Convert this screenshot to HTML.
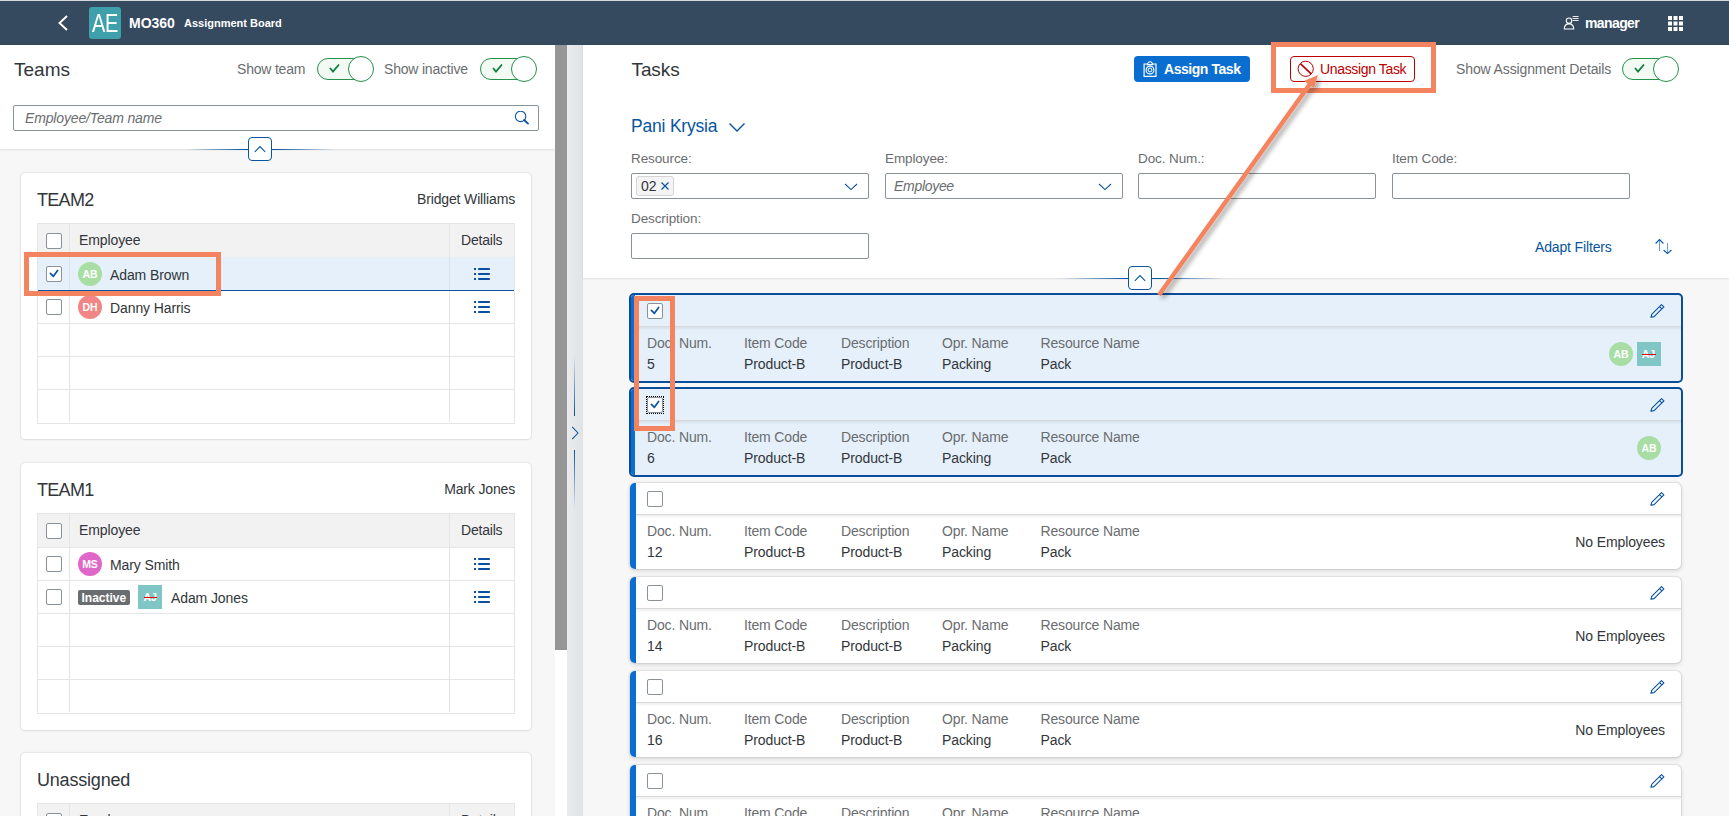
<!DOCTYPE html><html><head><meta charset="utf-8"><style>
*{box-sizing:border-box;margin:0;padding:0}
html,body{width:1729px;height:816px;overflow:hidden}
body{position:relative;background:#f7f7f7;font-family:"Liberation Sans",sans-serif;color:#32363a;font-size:14px}
.a{position:absolute}
.t{position:absolute;white-space:nowrap;line-height:1}
.cb{position:absolute;width:16px;height:16px;border:1px solid #89919a;border-radius:2px;background:#fff}
.cb svg{position:absolute;left:-1px;top:-1px}
.inp{position:absolute;height:26px;border:1px solid #89919a;border-radius:2px;background:#fff}
.lbl{position:absolute;white-space:nowrap;line-height:1;color:#6a6d70;font-size:13.5px}
.card{position:absolute;background:#fff;border-radius:4px;box-shadow:0 0 2px rgba(0,0,0,.2),0 1px 3px rgba(0,0,0,.05)}
.tb{position:absolute;background:#fff;border:1px solid #e5e5e5}
.hl{position:absolute;border:5px solid #f4845f}
.av{position:absolute;width:24px;height:24px;border-radius:50%;color:#fff;font-weight:bold;font-size:10.5px;text-align:center;line-height:24px}
.tog{position:absolute;width:57px;height:26px}
.tog .tr{position:absolute;left:0;top:2px;width:50px;height:22px;border:1px solid #25914a;border-radius:11px;background:#f3faf4}
.tog .kn{position:absolute;left:31px;top:0;width:26px;height:26px;border:1px solid #25914a;border-radius:50%;background:#fff}
.tog svg{position:absolute;left:12px;top:7px}
.task{position:absolute;left:630px;width:1051px;border-radius:5px;background:#fff;box-shadow:0 0 2px rgba(0,0,0,.28),0 2px 5px rgba(0,0,0,.12)}
.task .bar{position:absolute;left:0;top:0;bottom:0;width:6px;background:#0a6ed1;border-radius:5px 0 0 5px}
.task.sel{left:629px;width:1054px;background:#e5f0fa;border:2px solid #0a4e9b;box-shadow:none}
.task .sep{position:absolute;left:6px;right:0;height:1px;background:#e0e0e0}
.task .lab{position:absolute;white-space:nowrap;line-height:1;color:#6a6d70;font-size:14px}
.task .val{position:absolute;white-space:nowrap;line-height:1;color:#32363a;font-size:14px}
</style></head><body>
<div class="a" style="left:0;top:0;width:1729px;height:1px;background:#d5d8db"></div>
<div class="a" style="left:0;top:1px;width:1729px;height:44px;background:#354a5f"></div>
<svg class="a" style="left:56px;top:14px" width="14" height="18" viewBox="0 0 14 18"><path d="M11 2 L3.5 9 L11 16" fill="none" stroke="#fff" stroke-width="1.9"/></svg>
<div class="a" style="left:89px;top:7px;width:32px;height:32px;background:#3ea0ab;border-radius:3px"></div>
<div class="t" style="left:91.5px;top:10.84px;font-size:25px;color:#fff;font-weight:normal;transform:scaleX(0.8);transform-origin:0 0;letter-spacing:-0.5px;">AE</div>
<div class="t" style="left:129px;top:16.15px;font-size:14px;color:#fff;font-weight:bold;letter-spacing:0px;">MO360</div>
<div class="t" style="left:184px;top:17.69px;font-size:11px;color:#fff;font-weight:bold;letter-spacing:0px;">Assignment Board</div>
<svg class="a" style="left:1563px;top:15px" width="16" height="16" viewBox="0 0 16 16"><circle cx="6" cy="5.7" r="2.7" fill="none" stroke="#fff" stroke-width="1.1"/><path d="M1.3 14 C1.3 10.6 3.3 8.9 6 8.9 C8.7 8.9 10.7 10.6 10.7 14 Z" fill="none" stroke="#fff" stroke-width="1.1"/><path d="M9.6 1.5h6M9.6 3.5h6M9.6 5.5h6" stroke="#fff" stroke-width="0.9"/></svg>
<div class="t" style="left:1585px;top:16.15px;font-size:14px;color:#fff;font-weight:bold;letter-spacing:-0.6px;">manager</div>
<svg class="a" style="left:1667.5px;top:15.5px" width="15" height="15" viewBox="0 0 15 15"><rect x="0.0" y="0.0" width="4" height="4" fill="#fff"/><rect x="5.5" y="0.0" width="4" height="4" fill="#fff"/><rect x="11.0" y="0.0" width="4" height="4" fill="#fff"/><rect x="0.0" y="5.5" width="4" height="4" fill="#fff"/><rect x="5.5" y="5.5" width="4" height="4" fill="#fff"/><rect x="11.0" y="5.5" width="4" height="4" fill="#fff"/><rect x="0.0" y="11.0" width="4" height="4" fill="#fff"/><rect x="5.5" y="11.0" width="4" height="4" fill="#fff"/><rect x="11.0" y="11.0" width="4" height="4" fill="#fff"/></svg>
<div class="a" style="left:0;top:45px;width:555px;height:104px;background:#fff;box-shadow:0 1px 2px rgba(0,0,0,.1)"></div>
<div class="t" style="left:14px;top:59.92px;font-size:19px;color:#32363a;font-weight:normal;">Teams</div>
<div class="t" style="left:237px;top:62.15px;font-size:14px;color:#6a6d70;font-weight:normal;letter-spacing:-0.2px;">Show team</div>
<div class="t" style="left:384px;top:62.15px;font-size:14px;color:#6a6d70;font-weight:normal;letter-spacing:-0.2px;">Show inactive</div>
<div class="tog" style="left:317px;top:56px"><div class="tr"></div><svg width="11" height="10" viewBox="0 0 11 10"><path d="M1 5 L4 8.5 L10 1.5" fill="none" stroke="#107e3e" stroke-width="1.8"/></svg><div class="kn"></div></div>
<div class="tog" style="left:480px;top:56px"><div class="tr"></div><svg width="11" height="10" viewBox="0 0 11 10"><path d="M1 5 L4 8.5 L10 1.5" fill="none" stroke="#107e3e" stroke-width="1.8"/></svg><div class="kn"></div></div>
<div class="inp" style="left:13px;top:105px;width:526px;height:26px"></div>
<div class="t" style="left:25px;top:111.15px;font-size:14px;color:#6a6d70;font-weight:normal;font-style:italic;letter-spacing:-0.15px;">Employee/Team name</div>
<svg class="a" style="left:514px;top:111px" width="16" height="15" viewBox="0 0 16 15"><circle cx="6.6" cy="5.4" r="5.2" fill="none" stroke="#0854a0" stroke-width="1.05"/><path d="M10.2 9 L14 12.6" stroke="#0854a0" stroke-width="1.9" stroke-linecap="round"/></svg>
<div class="a" style="left:185px;top:149px;width:150px;height:1px;background:linear-gradient(90deg,rgba(8,84,160,0),#0854a0 40%,#0854a0 60%,rgba(8,84,160,0))"></div>
<div class="a" style="left:248px;top:137px;width:24px;height:24px;border:1px solid #0854a0;border-radius:4px;background:#fff"></div>
<svg class="a" style="left:248px;top:137px" width="24" height="24" viewBox="0 0 24 24"><path d="M6.8 14.8 L12 9.6 L17.2 14.8" fill="none" stroke="#0854a0" stroke-width="1.05"/></svg>
<div class="card" style="left:21px;top:173px;width:510px;height:266px"></div>
<div class="t" style="left:37px;top:190.76px;font-size:18px;color:#32363a;font-weight:normal;letter-spacing:-0.7px;">TEAM2</div>
<div class="t" style="left:515px;top:192.15px;font-size:14px;color:#32363a;font-weight:normal;transform:translateX(-100%);letter-spacing:-0.15px;">Bridget Williams</div>
<div class="tb" style="left:37px;top:223px;width:478px;height:201px"></div>
<div class="a" style="left:38px;top:224px;width:476px;height:33px;background:#f2f2f2"></div>
<div class="a" style="left:38px;top:257px;width:476px;height:1px;background:#e5e5e5"></div>
<div class="a" style="left:38px;top:290px;width:476px;height:1px;background:#e5e5e5"></div>
<div class="a" style="left:38px;top:323px;width:476px;height:1px;background:#e5e5e5"></div>
<div class="a" style="left:38px;top:356px;width:476px;height:1px;background:#e5e5e5"></div>
<div class="a" style="left:38px;top:389px;width:476px;height:1px;background:#e5e5e5"></div>
<div class="a" style="left:69px;top:224px;width:1px;height:198px;background:#e5e5e5"></div>
<div class="a" style="left:449px;top:224px;width:1px;height:198px;background:#e5e5e5"></div>
<div class="cb" style="left:46px;top:233px"></div>
<div class="t" style="left:79px;top:233.15px;font-size:14px;color:#32363a;font-weight:normal;letter-spacing:-0.1px;">Employee</div>
<div class="t" style="left:461px;top:233.15px;font-size:14px;color:#32363a;font-weight:normal;letter-spacing:-0.2px;">Details</div>
<div class="a" style="left:38px;top:257px;width:476px;height:34px;background:#e5f0fa;border-bottom:1px solid #0854a0"></div>
<div class="a" style="left:69px;top:257px;width:1px;height:33px;background:#dde3ea"></div>
<div class="a" style="left:449px;top:257px;width:1px;height:33px;background:#dde3ea"></div>
<div class="cb" style="left:46px;top:266px"><svg width="16" height="16" viewBox="0 0 16 16"><path d="M4.4 7.4 L7.4 10.3 L11.6 4.4" fill="none" stroke="#0854a0" stroke-width="1.7" stroke-linecap="round" stroke-linejoin="round"/></svg></div>
<div class="av" style="left:78px;top:262px;background:#a8dea4">AB</div>
<div class="t" style="left:110px;top:268.15px;font-size:14px;color:#32363a;font-weight:normal;letter-spacing:-0.1px;">Adam Brown</div>
<svg class="a" style="left:474px;top:268px" width="16" height="13" viewBox="0 0 16 13"><g fill="#0a4fa0"><rect x="0" y="0" width="2" height="2"/><rect x="0" y="5" width="2" height="2"/><rect x="0" y="10" width="2" height="2"/><rect x="4" y="0" width="12" height="2" rx="0.8"/><rect x="4" y="5" width="12" height="2" rx="0.8"/><rect x="4" y="10" width="12" height="2" rx="0.8"/></g></svg>
<div class="cb" style="left:46px;top:299px"></div>
<div class="av" style="left:78px;top:295px;background:#f28585">DH</div>
<div class="t" style="left:110px;top:301.15px;font-size:14px;color:#32363a;font-weight:normal;letter-spacing:-0.1px;">Danny Harris</div>
<svg class="a" style="left:474px;top:301px" width="16" height="13" viewBox="0 0 16 13"><g fill="#0a4fa0"><rect x="0" y="0" width="2" height="2"/><rect x="0" y="5" width="2" height="2"/><rect x="0" y="10" width="2" height="2"/><rect x="4" y="0" width="12" height="2" rx="0.8"/><rect x="4" y="5" width="12" height="2" rx="0.8"/><rect x="4" y="10" width="12" height="2" rx="0.8"/></g></svg>
<div class="card" style="left:21px;top:463px;width:510px;height:267px"></div>
<div class="t" style="left:37px;top:480.76px;font-size:18px;color:#32363a;font-weight:normal;letter-spacing:-0.7px;">TEAM1</div>
<div class="t" style="left:515px;top:482.15px;font-size:14px;color:#32363a;font-weight:normal;transform:translateX(-100%);letter-spacing:-0.15px;">Mark Jones</div>
<div class="tb" style="left:37px;top:513px;width:478px;height:201px"></div>
<div class="a" style="left:38px;top:514px;width:476px;height:33px;background:#f2f2f2"></div>
<div class="a" style="left:38px;top:547px;width:476px;height:1px;background:#e5e5e5"></div>
<div class="a" style="left:38px;top:580px;width:476px;height:1px;background:#e5e5e5"></div>
<div class="a" style="left:38px;top:613px;width:476px;height:1px;background:#e5e5e5"></div>
<div class="a" style="left:38px;top:646px;width:476px;height:1px;background:#e5e5e5"></div>
<div class="a" style="left:38px;top:679px;width:476px;height:1px;background:#e5e5e5"></div>
<div class="a" style="left:69px;top:514px;width:1px;height:198px;background:#e5e5e5"></div>
<div class="a" style="left:449px;top:514px;width:1px;height:198px;background:#e5e5e5"></div>
<div class="cb" style="left:46px;top:523px"></div>
<div class="t" style="left:79px;top:523.15px;font-size:14px;color:#32363a;font-weight:normal;letter-spacing:-0.1px;">Employee</div>
<div class="t" style="left:461px;top:523.15px;font-size:14px;color:#32363a;font-weight:normal;letter-spacing:-0.2px;">Details</div>
<div class="cb" style="left:46px;top:556px"></div>
<div class="av" style="left:78px;top:552px;background:#e066c8">MS</div>
<div class="t" style="left:110px;top:558.15px;font-size:14px;color:#32363a;font-weight:normal;letter-spacing:-0.1px;">Mary Smith</div>
<svg class="a" style="left:474px;top:558px" width="16" height="13" viewBox="0 0 16 13"><g fill="#0a4fa0"><rect x="0" y="0" width="2" height="2"/><rect x="0" y="5" width="2" height="2"/><rect x="0" y="10" width="2" height="2"/><rect x="4" y="0" width="12" height="2" rx="0.8"/><rect x="4" y="5" width="12" height="2" rx="0.8"/><rect x="4" y="10" width="12" height="2" rx="0.8"/></g></svg>
<div class="cb" style="left:46px;top:589px"></div>
<div class="a" style="left:78px;top:590px;width:52px;height:15px;background:#6a6d70;border-radius:2px"></div>
<div class="t" style="left:81.5px;top:592.34px;font-size:12px;color:#fff;font-weight:bold;letter-spacing:0px;">Inactive</div>
<div class="a" style="left:138px;top:585px;width:24px;height:24px;background:#7fc6c5"></div>
<div class="t" style="left:143.5px;top:592.11px;font-size:10.5px;color:#fff;font-weight:bold;">AJ</div>
<div class="a" style="left:144px;top:596.8px;width:13px;height:1.4px;background:#e00"></div>
<div class="t" style="left:171px;top:591.15px;font-size:14px;color:#32363a;font-weight:normal;letter-spacing:-0.1px;">Adam Jones</div>
<svg class="a" style="left:474px;top:591px" width="16" height="13" viewBox="0 0 16 13"><g fill="#0a4fa0"><rect x="0" y="0" width="2" height="2"/><rect x="0" y="5" width="2" height="2"/><rect x="0" y="10" width="2" height="2"/><rect x="4" y="0" width="12" height="2" rx="0.8"/><rect x="4" y="5" width="12" height="2" rx="0.8"/><rect x="4" y="10" width="12" height="2" rx="0.8"/></g></svg>
<div class="card" style="left:21px;top:753px;width:510px;height:100px"></div>
<div class="t" style="left:37px;top:770.76px;font-size:18px;color:#32363a;font-weight:normal;letter-spacing:-0.2px;">Unassigned</div>
<div class="tb" style="left:37px;top:803px;width:478px;height:40px;background:#f2f2f2"></div>
<div class="a" style="left:69px;top:804px;width:1px;height:20px;background:#e5e5e5"></div>
<div class="a" style="left:449px;top:804px;width:1px;height:20px;background:#e5e5e5"></div>
<div class="cb" style="left:46px;top:813px"></div>
<div class="t" style="left:79px;top:813.15px;font-size:14px;color:#32363a;font-weight:normal;letter-spacing:-0.1px;">Employee</div>
<div class="t" style="left:461px;top:813.15px;font-size:14px;color:#32363a;font-weight:normal;letter-spacing:-0.2px;">Details</div>
<div class="hl" style="left:24px;top:252px;width:197px;height:44px"></div>
<div class="a" style="left:555px;top:45px;width:12px;height:605px;background:#969696"></div>
<div class="a" style="left:555px;top:650px;width:12px;height:166px;background:#fff"></div>
<div class="a" style="left:567px;top:45px;width:16px;height:771px;background:linear-gradient(90deg,#e9ebec,#e0e3e6)"></div>
<div class="a" style="left:574px;top:355px;width:1px;height:61px;background:linear-gradient(180deg,rgba(8,84,160,0),#0854a0)"></div>
<div class="a" style="left:574px;top:450px;width:1px;height:59px;background:linear-gradient(180deg,#0854a0,rgba(8,84,160,0))"></div>
<svg class="a" style="left:570px;top:425px" width="10" height="16" viewBox="0 0 10 16"><path d="M2.2 1.8 L8 8 L2.2 14.2" fill="none" stroke="#0854a0" stroke-width="1.05"/></svg>
<div class="a" style="left:583px;top:45px;width:1146px;height:233px;background:#fff;box-shadow:0 1px 2px rgba(0,0,0,.1)"></div>
<div class="t" style="left:631.5px;top:59.92px;font-size:19px;color:#32363a;font-weight:normal;letter-spacing:-0.1px;">Tasks</div>
<div class="a" style="left:1134px;top:56px;width:116px;height:26px;background:#0a6ed1;border-radius:4px"></div>
<svg class="a" style="left:1143px;top:60px" width="15" height="18" viewBox="0 0 15 18"><path d="M4.5 4 H1.1 V16.3 H13 V4 H9.5" fill="none" stroke="#fff" stroke-width="1.2"/><path d="M4.3 4.6 L5 2.8 Q7 0.6 9 2.8 L9.7 4.6 Z" fill="none" stroke="#fff" stroke-width="1.1"/><circle cx="7" cy="10" r="3.9" fill="none" stroke="#fff" stroke-width="1.1"/><circle cx="7" cy="10" r="1.9" fill="none" stroke="#fff" stroke-width="1"/></svg>
<div class="t" style="left:1164px;top:62.15px;font-size:14px;color:#fff;font-weight:bold;letter-spacing:-0.45px;">Assign Task</div>
<div class="a" style="left:1290px;top:56px;width:125px;height:26px;border:1px solid #bb0000;border-radius:4px;background:#fff"></div>
<svg class="a" style="left:1297px;top:60px" width="17" height="18" viewBox="0 0 17 18"><circle cx="8.7" cy="8.8" r="7.6" fill="none" stroke="#bb0000" stroke-width="1"/><path d="M3.6 3.8 L14.2 13.8" stroke="#bb0000" stroke-width="1.7"/></svg>
<div class="t" style="left:1320px;top:62.15px;font-size:14px;color:#bb0000;font-weight:normal;letter-spacing:-0.35px;">Unassign Task</div>
<div class="t" style="left:1456px;top:62.15px;font-size:14px;color:#6a6d70;font-weight:normal;letter-spacing:-0.12px;">Show Assignment Details</div>
<div class="tog" style="left:1622px;top:56px"><div class="tr"></div><svg width="11" height="10" viewBox="0 0 11 10"><path d="M1 5 L4 8.5 L10 1.5" fill="none" stroke="#107e3e" stroke-width="1.8"/></svg><div class="kn"></div></div>
<div class="t" style="left:631px;top:117.69px;font-size:17.5px;color:#0854a0;font-weight:normal;letter-spacing:-0.2px;">Pani Krysia</div>
<svg class="a" style="left:728px;top:121px" width="18" height="12" viewBox="0 0 18 12"><path d="M1.5 2.5 L9 10 L16.5 2.5" fill="none" stroke="#0854a0" stroke-width="1.4"/></svg>
<div class="t" style="left:631px;top:151.57px;font-size:13.5px;color:#6a6d70;font-weight:normal;letter-spacing:-0.1px;">Resource:</div>
<div class="inp" style="left:631px;top:173px;width:238px;height:26px"></div>
<div class="t" style="left:885px;top:151.57px;font-size:13.5px;color:#6a6d70;font-weight:normal;letter-spacing:-0.1px;">Employee:</div>
<div class="inp" style="left:885px;top:173px;width:238px;height:26px"></div>
<div class="t" style="left:1138px;top:151.57px;font-size:13.5px;color:#6a6d70;font-weight:normal;letter-spacing:-0.1px;">Doc. Num.:</div>
<div class="inp" style="left:1138px;top:173px;width:238px;height:26px"></div>
<div class="t" style="left:1392px;top:151.57px;font-size:13.5px;color:#6a6d70;font-weight:normal;letter-spacing:-0.1px;">Item Code:</div>
<div class="inp" style="left:1392px;top:173px;width:238px;height:26px"></div>
<div class="a" style="left:636px;top:176px;width:38px;height:20px;border:1px solid #d5d5d5;border-radius:3px;background:#f4f4f4"></div>
<div class="t" style="left:641px;top:179.15px;font-size:14px;color:#32363a;font-weight:normal;">02</div>
<svg class="a" style="left:660px;top:181px" width="10" height="10" viewBox="0 0 10 10"><path d="M1.5 1.5 L8.5 8.5 M8.5 1.5 L1.5 8.5" stroke="#0854a0" stroke-width="1.2"/></svg>
<svg class="a" style="left:844px;top:183px" width="14" height="8" viewBox="0 0 14 8"><path d="M1 1 L7 6.6 L13 1" fill="none" stroke="#0854a0" stroke-width="1.05"/></svg>
<div class="t" style="left:894px;top:179.15px;font-size:14px;color:#6a6d70;font-weight:normal;font-style:italic;letter-spacing:-0.3px;">Employee</div>
<svg class="a" style="left:1098px;top:183px" width="14" height="8" viewBox="0 0 14 8"><path d="M1 1 L7 6.6 L13 1" fill="none" stroke="#0854a0" stroke-width="1.05"/></svg>
<div class="t" style="left:631px;top:211.57px;font-size:13.5px;color:#6a6d70;font-weight:normal;letter-spacing:-0.1px;">Description:</div>
<div class="inp" style="left:631px;top:233px;width:238px;height:26px"></div>
<div class="t" style="left:1535px;top:239.65px;font-size:14px;color:#0854a0;font-weight:normal;letter-spacing:-0.15px;">Adapt Filters</div>
<svg class="a" style="left:1653px;top:238px" width="20" height="17" viewBox="0 0 20 17"><path d="M6.5 13 V2" fill="none" stroke="#6d9bd0" stroke-width="1.1"/><path d="M2.6 5.5 L6.5 1.6 L10.4 5.5" fill="none" stroke="#0854a0" stroke-width="1.1"/><path d="M14.5 5 V15" fill="none" stroke="#6d9bd0" stroke-width="1.1"/><path d="M10.6 12 L14.5 15.6 L18.4 12" fill="none" stroke="#0854a0" stroke-width="1.1"/></svg>
<div class="a" style="left:1060px;top:278px;width:165px;height:1px;background:linear-gradient(90deg,rgba(8,84,160,0),#0854a0 40%,#0854a0 60%,rgba(8,84,160,0))"></div>
<div class="a" style="left:1128px;top:266px;width:24px;height:24px;border:1px solid #0854a0;border-radius:4px;background:#fff"></div>
<svg class="a" style="left:1128px;top:266px" width="24" height="24" viewBox="0 0 24 24"><path d="M6.8 14.8 L12 9.6 L17.2 14.8" fill="none" stroke="#0854a0" stroke-width="1.05"/></svg>
<div class="task sel" style="top:293px;height:90px">
<div class="bar" style="left:-0.5px;top:0;bottom:0;width:4px;border-radius:3px 0 0 3px"></div>
<div class="sep" style="top:31px;background:#d9d9d9;box-shadow:0 1px 0 rgba(0,0,0,.055),0 2px 0 rgba(0,0,0,.035),0 3px 0 rgba(0,0,0,.02)"></div>
<div class="cb" style="left:16px;top:8px"><svg width="16" height="16" viewBox="0 0 16 16"><path d="M4.4 7.4 L7.4 10.3 L11.6 4.4" fill="none" stroke="#0854a0" stroke-width="1.7" stroke-linecap="round" stroke-linejoin="round"/></svg></div>
<div class="lab" style="left:16px;top:41.15px;letter-spacing:-0.15px">Doc. Num.</div>
<div class="val" style="left:16px;top:62.15px;letter-spacing:-0.1px">5</div>
<div class="lab" style="left:113px;top:41.15px;letter-spacing:-0.15px">Item Code</div>
<div class="val" style="left:113px;top:62.15px;letter-spacing:-0.1px">Product-B</div>
<div class="lab" style="left:210px;top:41.15px;letter-spacing:-0.15px">Description</div>
<div class="val" style="left:210px;top:62.15px;letter-spacing:-0.1px">Product-B</div>
<div class="lab" style="left:311px;top:41.15px;letter-spacing:-0.15px">Opr. Name</div>
<div class="val" style="left:311px;top:62.15px;letter-spacing:-0.1px">Packing</div>
<div class="lab" style="left:409.5px;top:41.15px;letter-spacing:-0.15px">Resource Name</div>
<div class="val" style="left:409.5px;top:62.15px;letter-spacing:-0.1px">Pack</div>
<svg class="a" style="left:1019px;top:9px" width="15" height="14" viewBox="0 0 15 14"><path d="M0.9 13.3 L1.7 10.4 L11.5 0.6 L13.9 2.9 L4.1 12.6 Z M9.5 2.6 L11.9 4.9" fill="none" stroke="#0854a0" stroke-width="1.1" stroke-linejoin="round"/></svg>
<div class="av" style="left:978px;top:47px;background:#a8dea4">AB</div>
<div class="a" style="left:1006px;top:47px;width:24px;height:24px;background:#7fc6c5"></div>
<div class="t" style="left:1010.7px;top:54px;font-size:10.5px;color:#fff;font-weight:bold">AJ</div>
<div class="a" style="left:1011px;top:59px;width:14px;height:1.4px;background:#e00"></div>
</div>
<div class="task sel" style="top:387px;height:90px">
<div class="bar" style="left:-0.5px;top:0;bottom:0;width:4px;border-radius:3px 0 0 3px"></div>
<div class="sep" style="top:31px;background:#d9d9d9;box-shadow:0 1px 0 rgba(0,0,0,.055),0 2px 0 rgba(0,0,0,.035),0 3px 0 rgba(0,0,0,.02)"></div>
<div class="cb" style="left:16px;top:8px"><svg width="16" height="16" viewBox="0 0 16 16"><path d="M4.4 7.4 L7.4 10.3 L11.6 4.4" fill="none" stroke="#0854a0" stroke-width="1.7" stroke-linecap="round" stroke-linejoin="round"/></svg></div>
<div class="a" style="left:15px;top:7px;width:18px;height:18px;border:1px dotted #000"></div>
<div class="lab" style="left:16px;top:41.15px;letter-spacing:-0.15px">Doc. Num.</div>
<div class="val" style="left:16px;top:62.15px;letter-spacing:-0.1px">6</div>
<div class="lab" style="left:113px;top:41.15px;letter-spacing:-0.15px">Item Code</div>
<div class="val" style="left:113px;top:62.15px;letter-spacing:-0.1px">Product-B</div>
<div class="lab" style="left:210px;top:41.15px;letter-spacing:-0.15px">Description</div>
<div class="val" style="left:210px;top:62.15px;letter-spacing:-0.1px">Product-B</div>
<div class="lab" style="left:311px;top:41.15px;letter-spacing:-0.15px">Opr. Name</div>
<div class="val" style="left:311px;top:62.15px;letter-spacing:-0.1px">Packing</div>
<div class="lab" style="left:409.5px;top:41.15px;letter-spacing:-0.15px">Resource Name</div>
<div class="val" style="left:409.5px;top:62.15px;letter-spacing:-0.1px">Pack</div>
<svg class="a" style="left:1019px;top:9px" width="15" height="14" viewBox="0 0 15 14"><path d="M0.9 13.3 L1.7 10.4 L11.5 0.6 L13.9 2.9 L4.1 12.6 Z M9.5 2.6 L11.9 4.9" fill="none" stroke="#0854a0" stroke-width="1.1" stroke-linejoin="round"/></svg>
<div class="av" style="left:1006px;top:47px;background:#a8dea4">AB</div>
</div>
<div class="task" style="top:483px;height:86px">
<div class="bar"></div>
<div class="sep" style="top:31px;background:#d9d9d9;box-shadow:0 1px 0 rgba(0,0,0,.055),0 2px 0 rgba(0,0,0,.035),0 3px 0 rgba(0,0,0,.02)"></div>
<div class="cb" style="left:17px;top:8px"></div>
<div class="lab" style="left:17px;top:41.15px;letter-spacing:-0.15px">Doc. Num.</div>
<div class="val" style="left:17px;top:62.15px;letter-spacing:-0.1px">12</div>
<div class="lab" style="left:114px;top:41.15px;letter-spacing:-0.15px">Item Code</div>
<div class="val" style="left:114px;top:62.15px;letter-spacing:-0.1px">Product-B</div>
<div class="lab" style="left:211px;top:41.15px;letter-spacing:-0.15px">Description</div>
<div class="val" style="left:211px;top:62.15px;letter-spacing:-0.1px">Product-B</div>
<div class="lab" style="left:312px;top:41.15px;letter-spacing:-0.15px">Opr. Name</div>
<div class="val" style="left:312px;top:62.15px;letter-spacing:-0.1px">Packing</div>
<div class="lab" style="left:410.5px;top:41.15px;letter-spacing:-0.15px">Resource Name</div>
<div class="val" style="left:410.5px;top:62.15px;letter-spacing:-0.1px">Pack</div>
<svg class="a" style="left:1020px;top:9px" width="15" height="14" viewBox="0 0 15 14"><path d="M0.9 13.3 L1.7 10.4 L11.5 0.6 L13.9 2.9 L4.1 12.6 Z M9.5 2.6 L11.9 4.9" fill="none" stroke="#0854a0" stroke-width="1.1" stroke-linejoin="round"/></svg>
<div class="t" style="right:16px;top:52.2px;font-size:14px;letter-spacing:-0.1px">No Employees</div>
</div>
<div class="task" style="top:577px;height:86px">
<div class="bar"></div>
<div class="sep" style="top:31px;background:#d9d9d9;box-shadow:0 1px 0 rgba(0,0,0,.055),0 2px 0 rgba(0,0,0,.035),0 3px 0 rgba(0,0,0,.02)"></div>
<div class="cb" style="left:17px;top:8px"></div>
<div class="lab" style="left:17px;top:41.15px;letter-spacing:-0.15px">Doc. Num.</div>
<div class="val" style="left:17px;top:62.15px;letter-spacing:-0.1px">14</div>
<div class="lab" style="left:114px;top:41.15px;letter-spacing:-0.15px">Item Code</div>
<div class="val" style="left:114px;top:62.15px;letter-spacing:-0.1px">Product-B</div>
<div class="lab" style="left:211px;top:41.15px;letter-spacing:-0.15px">Description</div>
<div class="val" style="left:211px;top:62.15px;letter-spacing:-0.1px">Product-B</div>
<div class="lab" style="left:312px;top:41.15px;letter-spacing:-0.15px">Opr. Name</div>
<div class="val" style="left:312px;top:62.15px;letter-spacing:-0.1px">Packing</div>
<div class="lab" style="left:410.5px;top:41.15px;letter-spacing:-0.15px">Resource Name</div>
<div class="val" style="left:410.5px;top:62.15px;letter-spacing:-0.1px">Pack</div>
<svg class="a" style="left:1020px;top:9px" width="15" height="14" viewBox="0 0 15 14"><path d="M0.9 13.3 L1.7 10.4 L11.5 0.6 L13.9 2.9 L4.1 12.6 Z M9.5 2.6 L11.9 4.9" fill="none" stroke="#0854a0" stroke-width="1.1" stroke-linejoin="round"/></svg>
<div class="t" style="right:16px;top:52.2px;font-size:14px;letter-spacing:-0.1px">No Employees</div>
</div>
<div class="task" style="top:671px;height:86px">
<div class="bar"></div>
<div class="sep" style="top:31px;background:#d9d9d9;box-shadow:0 1px 0 rgba(0,0,0,.055),0 2px 0 rgba(0,0,0,.035),0 3px 0 rgba(0,0,0,.02)"></div>
<div class="cb" style="left:17px;top:8px"></div>
<div class="lab" style="left:17px;top:41.15px;letter-spacing:-0.15px">Doc. Num.</div>
<div class="val" style="left:17px;top:62.15px;letter-spacing:-0.1px">16</div>
<div class="lab" style="left:114px;top:41.15px;letter-spacing:-0.15px">Item Code</div>
<div class="val" style="left:114px;top:62.15px;letter-spacing:-0.1px">Product-B</div>
<div class="lab" style="left:211px;top:41.15px;letter-spacing:-0.15px">Description</div>
<div class="val" style="left:211px;top:62.15px;letter-spacing:-0.1px">Product-B</div>
<div class="lab" style="left:312px;top:41.15px;letter-spacing:-0.15px">Opr. Name</div>
<div class="val" style="left:312px;top:62.15px;letter-spacing:-0.1px">Packing</div>
<div class="lab" style="left:410.5px;top:41.15px;letter-spacing:-0.15px">Resource Name</div>
<div class="val" style="left:410.5px;top:62.15px;letter-spacing:-0.1px">Pack</div>
<svg class="a" style="left:1020px;top:9px" width="15" height="14" viewBox="0 0 15 14"><path d="M0.9 13.3 L1.7 10.4 L11.5 0.6 L13.9 2.9 L4.1 12.6 Z M9.5 2.6 L11.9 4.9" fill="none" stroke="#0854a0" stroke-width="1.1" stroke-linejoin="round"/></svg>
<div class="t" style="right:16px;top:52.2px;font-size:14px;letter-spacing:-0.1px">No Employees</div>
</div>
<div class="task" style="top:765px;height:86px">
<div class="bar"></div>
<div class="sep" style="top:31px;background:#d9d9d9;box-shadow:0 1px 0 rgba(0,0,0,.055),0 2px 0 rgba(0,0,0,.035),0 3px 0 rgba(0,0,0,.02)"></div>
<div class="cb" style="left:17px;top:8px"></div>
<div class="lab" style="left:17px;top:41.15px;letter-spacing:-0.15px">Doc. Num.</div>
<div class="val" style="left:17px;top:62.15px;letter-spacing:-0.1px"></div>
<div class="lab" style="left:114px;top:41.15px;letter-spacing:-0.15px">Item Code</div>
<div class="val" style="left:114px;top:62.15px;letter-spacing:-0.1px">Product-B</div>
<div class="lab" style="left:211px;top:41.15px;letter-spacing:-0.15px">Description</div>
<div class="val" style="left:211px;top:62.15px;letter-spacing:-0.1px">Product-B</div>
<div class="lab" style="left:312px;top:41.15px;letter-spacing:-0.15px">Opr. Name</div>
<div class="val" style="left:312px;top:62.15px;letter-spacing:-0.1px">Packing</div>
<div class="lab" style="left:410.5px;top:41.15px;letter-spacing:-0.15px">Resource Name</div>
<div class="val" style="left:410.5px;top:62.15px;letter-spacing:-0.1px">Pack</div>
<svg class="a" style="left:1020px;top:9px" width="15" height="14" viewBox="0 0 15 14"><path d="M0.9 13.3 L1.7 10.4 L11.5 0.6 L13.9 2.9 L4.1 12.6 Z M9.5 2.6 L11.9 4.9" fill="none" stroke="#0854a0" stroke-width="1.1" stroke-linejoin="round"/></svg>
<div class="t" style="right:16px;top:52.2px;font-size:14px;letter-spacing:-0.1px">No Employees</div>
</div>
<div class="hl" style="left:634px;top:296px;width:41px;height:135px"></div>
<div class="hl" style="left:1271px;top:42px;width:165px;height:51px"></div>
<svg class="a" style="left:0;top:0;overflow:visible" width="1729" height="816">
<defs><filter id="sh" x="-20%" y="-20%" width="140%" height="140%"><feGaussianBlur in="SourceAlpha" stdDeviation="2.5"/><feOffset dx="3" dy="3"/><feComponentTransfer><feFuncA type="linear" slope="0.35"/></feComponentTransfer><feMerge><feMergeNode/><feMergeNode in="SourceGraphic"/></feMerge></filter></defs>
<g filter="url(#sh)"><path d="M1159 295 L1310 84" stroke="#f4845f" stroke-width="4.5" fill="none"/><path d="M1318 75 L1304 81 L1314 88 Z" fill="#f4845f"/></g>
</svg>
</body></html>
